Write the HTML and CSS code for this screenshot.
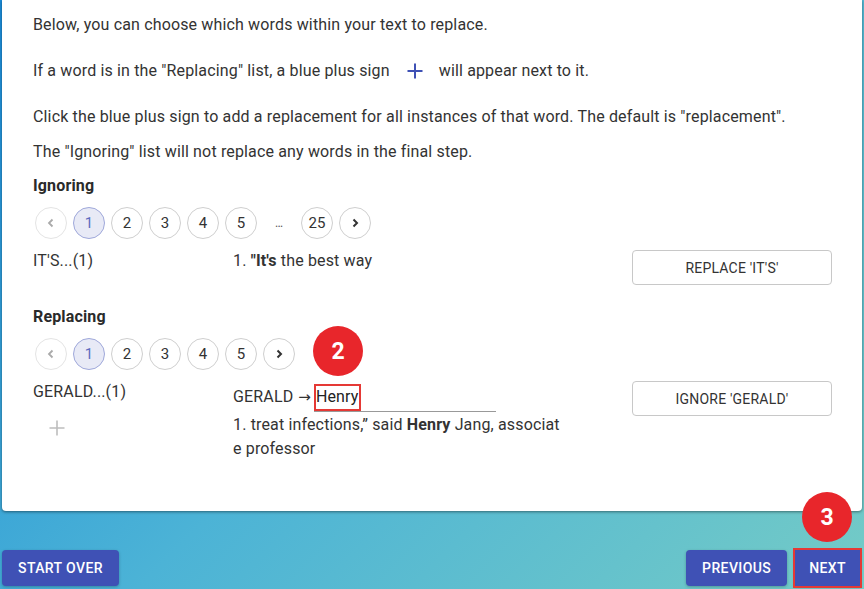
FILE: index.html
```html
<!DOCTYPE html>
<html>
<head>
<meta charset="utf-8">
<link rel="stylesheet" href="styles.css">
</head>
<body>
<div class="page">
  <div class="card">
    <p class="intro">Below, you can choose which words within your text to replace.</p>
    <p class="intro with-icon">If a word is in the "Replacing" list, a blue plus sign<span class="plus-inline"><svg width="24" height="24" viewBox="0 0 24 24"><path d="M12 4.5v15M4.5 12h15" stroke="#3f51b5" stroke-width="2" fill="none"/></svg></span>will appear next to it.</p>
    <p class="intro">Click the blue plus sign to add a replacement for all instances of that word. The default is "replacement".</p>
    <p class="intro">The "Ignoring" list will not replace any words in the final step.</p>

    <h3 class="section-title">Ignoring</h3>
    <div class="pager">
      <span class="pg pg-disabled"><svg width="12" height="12" viewBox="0 0 12 12"><path d="M7.5 2.5L4 6l3.5 3.5" stroke="#aaa" stroke-width="1.8" fill="none"/></svg></span>
      <span class="pg pg-active">1</span>
      <span class="pg">2</span>
      <span class="pg">3</span>
      <span class="pg">4</span>
      <span class="pg">5</span>
      <span class="pg pg-ellipsis">…</span>
      <span class="pg">25</span>
      <span class="pg"><svg width="12" height="12" viewBox="0 0 12 12"><path d="M4.5 2.5L8 6 4.5 9.5" stroke="#333" stroke-width="2" fill="none"/></svg></span>
    </div>
    <div class="word-row">
      <div class="word-col">IT'S...(1)</div>
      <div class="context-col"><div class="ctx-line">1. <b>"It's</b> the best way</div></div>
      <button class="outline-btn">Replace 'IT'S'</button>
    </div>

    <h3 class="section-title second">Replacing</h3>
    <div class="pager">
      <span class="pg pg-disabled"><svg width="12" height="12" viewBox="0 0 12 12"><path d="M7.5 2.5L4 6l3.5 3.5" stroke="#aaa" stroke-width="1.8" fill="none"/></svg></span>
      <span class="pg pg-active">1</span>
      <span class="pg">2</span>
      <span class="pg">3</span>
      <span class="pg">4</span>
      <span class="pg">5</span>
      <span class="pg"><svg width="12" height="12" viewBox="0 0 12 12"><path d="M4.5 2.5L8 6 4.5 9.5" stroke="#333" stroke-width="2" fill="none"/></svg></span>
    </div>
    <div class="word-row">
      <div class="word-col">
        <div class="word-label">GERALD...(1)</div>
        <span class="add-btn"><svg width="24" height="24" viewBox="0 0 24 24"><path d="M12 4.5v15M4.5 12h15" stroke="#bdbdbd" stroke-width="1.6" fill="none"/></svg></span>
      </div>
      <div class="context-col">
        <div class="replace-line">
          <span>GERALD</span><span class="arrow">→</span>
          <span class="field"><span class="field-text">Henry</span><span class="highlight-box"></span></span>
        </div>
        <div class="ctx-wrap">1. treat infections,” said <b>Henry</b> Jang, associate professor</div>
      </div>
      <button class="outline-btn">Ignore 'GERALD'</button>
    </div>
    <span class="step-badge badge-two">2</span>
  </div>

  <div class="footer">
    <button class="primary-btn">Start over</button>
    <div class="footer-right">
      <button class="primary-btn">Previous</button>
      <button class="primary-btn next-btn">Next</button>
    </div>
  </div>
  <span class="step-badge badge-three">3</span>
</div>
</body>
</html>
```

FILE: styles.css
```css
* { box-sizing: border-box; }

html, body {
  margin: 0;
  padding: 0;
  height: 100%;
}

body {
  font-family: Roboto, "Liberation Sans", Arial, sans-serif;
  color: #333;
  background: linear-gradient(135deg, #1a8bd8 0%, #4cb3d6 50%, #74cbc6 100%);
  overflow: hidden;
}

.page {
  position: relative;
  height: 589px;
}

.card {
  position: relative;
  margin: 0 2px;
  background: #fff;
  border-radius: 0 0 4px 4px;
  box-shadow: 0 1px 3px rgba(0, 0, 0, 0.45);
  padding: 15px 30px 50px 31px;
  height: 511px;
  font-size: 16px;
  letter-spacing: 0.15px;
}

.intro {
  margin: 0 0 15px;
  font-size: 16px;
  line-height: 20px;
}

.with-icon {
  display: flex;
  align-items: center;
  height: 42px;
}

.plus-inline {
  display: inline-flex;
  width: 48px;
  height: 42px;
  align-items: center;
  justify-content: center;
  margin-left: 1px;
}

.section-title {
  margin: -1px 0 0;
  font-size: 16px;
  line-height: 20px;
  font-weight: 700;
  color: #2a2a2a;
}

.section-title.second {
  margin-top: 22px;
}

.pager {
  display: flex;
  gap: 6px;
  padding-left: 2px;
  margin-top: 11px;
  letter-spacing: 0;
}

.pg {
  width: 32px;
  height: 32px;
  border-radius: 50%;
  border: 1px solid #cfcfcf;
  display: flex;
  align-items: center;
  justify-content: center;
  font-size: 15px;
  color: #333;
}

.pg-disabled {
  border-color: #e4e4e4;
}

.pg-active {
  background: #e8eaf6;
  border-color: #9fa8da;
  color: #5c6bc0;
}

.pg-ellipsis {
  border: none;
  font-size: 12px;
  color: #555;
}

.word-row {
  display: grid;
  grid-template-columns: 200px 331px 1fr;
  margin-top: 11px;
  font-size: 16px;
  line-height: 20px;
}

.word-col {
  padding-top: 1px;
}

.add-btn {
  display: flex;
  width: 48px;
  height: 48px;
  align-items: center;
  justify-content: center;
  margin-top: 2px;
}

.context-col {
  padding-top: 1px;
}

.outline-btn {
  justify-self: end;
  width: 200px;
  height: 35px;
  background: #fff;
  border: 1px solid #c8c8c8;
  border-radius: 4px;
  font-family: Roboto, "Liberation Sans", Arial, sans-serif;
  font-size: 14px;
  letter-spacing: 0.2px;
  text-transform: uppercase;
  color: #333;
  padding: 0;
}

.replace-line {
  display: flex;
  align-items: center;
  height: 30px;
}

.arrow {
  font-family: "DejaVu Sans", "Noto Sans", sans-serif;
  font-size: 15px;
  margin-left: 5px;
  letter-spacing: 0;
}

.field {
  position: relative;
  display: flex;
  align-items: center;
  width: 182px;
  height: 30px;
  margin-left: 3px;
  border-bottom: 1px solid #999;
  padding-left: 2px;
  color: #222;
}

.highlight-box {
  position: absolute;
  left: 0;
  top: 2px;
  width: 47px;
  height: 27px;
  border: 2px solid #e53935;
}

.ctx-wrap {
  margin-top: 1px;
  line-height: 24px;
  word-break: break-all;
}

.step-badge {
  position: absolute;
  width: 50px;
  height: 50px;
  border-radius: 50%;
  background: #e8262b;
  color: #fff;
  font-family: Roboto, "Liberation Sans", Arial, sans-serif;
  font-weight: 700;
  font-size: 23px;
  letter-spacing: 0;
  display: flex;
  align-items: center;
  justify-content: center;
}

.badge-two {
  left: 311px;
  top: 326px;
}

.badge-three {
  left: 802px;
  top: 492px;
}

.footer {
  display: flex;
  justify-content: space-between;
  align-items: center;
  margin-top: 39px;
  padding: 0 4px 0 2px;
}

.footer-right {
  display: flex;
  gap: 8px;
}

.primary-btn {
  height: 36px;
  min-width: 64px;
  padding: 0 16px;
  background: #3f51b5;
  color: #fff;
  border: none;
  border-radius: 4px;
  font-family: Roboto, "Liberation Sans", Arial, sans-serif;
  font-size: 14px;
  font-weight: 500;
  letter-spacing: 0.4px;
  text-transform: uppercase;
  box-shadow: 0 1px 3px rgba(0, 0, 0, 0.25);
}

.next-btn {
  padding: 0 14px;
  outline: 2px solid #e53935;
  border-radius: 0;
}
```
